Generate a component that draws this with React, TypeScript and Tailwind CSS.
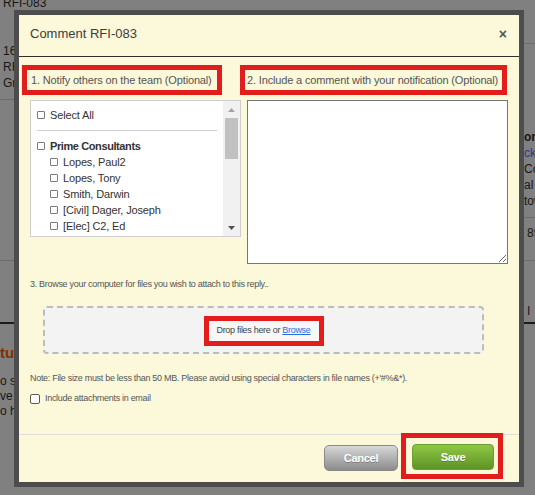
import { ReactNode } from 'react'

const members = ['Lopes, Paul2', 'Lopes, Tony', 'Smith, Darwin', '[Civil] Dager, Joseph', '[Elec] C2, Ed', '[Elec] Hart, Sam']

function Check({ big = false }: { big?: boolean }) {
  return (
    <span
      className={
        big
          ? 'inline-block h-[10px] w-[10px] shrink-0 rounded-[2px] border border-[#5a5a5a] bg-white'
          : 'inline-block h-[8px] w-[8px] shrink-0 rounded-[1px] border border-[#7a7a7a] bg-white'
      }
    />
  )
}

function Flag({ className, children }: { className: string; children: ReactNode }) {
  // red annotation frame round a label
  return <div className={`flex h-[30px] items-center border-[5px] border-[#e31c1c] ${className}`}>{children}</div>
}

export default function App() {
  return (
    <div className="relative h-[495px] w-[535px] overflow-hidden bg-[#808080] font-['Liberation_Sans',Arial,sans-serif] text-[12px] text-[#161616]">
      {/* page behind the overlay */}
      <div className="flex h-full">
        <div className="w-[524px] shrink-0 pl-[3px]">
          <div className="-mt-[4px] leading-[14px]">RFI-083</div>
          <div className="mt-[33px] leading-[16px]">
            <div>16/08/2021</div>
            <div>RFI</div>
            <div>Group</div>
          </div>
          <div className="-ml-[3px] mt-[8px] h-px w-[40px] bg-[#6c6c6c]" />
          <div className="-ml-[3px] mt-[160px] h-px w-[40px] bg-[#6c6c6c]" />
          <div className="-ml-[3px] mt-[61px] h-[2px] w-[40px] bg-[#1c1c1c]" />
          <div className="-ml-[3px] mt-[20px] text-[15px] font-bold leading-[18px] text-[#7c3300]">tus</div>
          <div className="-ml-[3px] mt-[12px] leading-[15px]">
            <div>o start</div>
            <div>ve a</div>
            <div>o help</div>
          </div>
        </div>
        <div className="w-[60px] shrink-0">
          <div className="mt-[43px] h-px bg-[#6c6c6c]" />
          <div className="mt-[85px] leading-[16px]">
            <div className="font-bold">or:</div>
            <div className="text-[#243b87]">ck</div>
            <div>Co</div>
            <div>al St</div>
            <div>town</div>
          </div>
          <div className="mt-[8px] h-px bg-[#6c6c6c]" />
          <div className="mt-[7px] pl-[3px] leading-[16px]">89</div>
          <div className="mt-[19px] h-px bg-[#6c6c6c]" />
          <div className="mt-[42px] pl-[3px] leading-[16px]">I</div>
          <div className="mt-[3px] h-[2px] bg-[#1c1c1c]" />
        </div>
      </div>

      {/* dialog */}
      <div className="absolute left-[14px] top-[10px] flex h-[477px] w-[510px] flex-col border-[5px] border-[#4d4d4d] bg-[#fcf8da]">
        <div className="flex h-[42px] shrink-0 items-center justify-between border-b border-[#2f2f2f] pb-[3px] pl-[11px] pr-[12px]">
          <span className="text-[13px] text-[#3c3c3c]">Comment RFI-083</span>
          <span className="text-[14px] font-bold leading-none text-[#555]">×</span>
        </div>

        <div className="px-[11px] pt-[8px] text-[#555]">
          <div className="flex gap-[6px]">
            <div className="w-[211px]">
              <Flag className="-ml-[8px] mb-[5px] w-[200px] pl-[4px]">
                <span className="text-[11px] tracking-[-0.15px]">1. Notify others on the team (Optional)</span>
              </Flag>
              <div className="flex h-[137px] border border-[#cfcfcf] bg-white">
                <div className="flex-1 overflow-hidden pl-[6px] pt-[6px] text-[11px] tracking-[-0.15px] text-[#333]">
                  <div className="flex h-[16px] items-center gap-[5px]">
                    <Check />
                    <span>Select All</span>
                  </div>
                  <div className="my-[7px] h-px w-[180px] bg-[#cfcfcf]" />
                  <div className="flex h-[16px] items-center gap-[5px]">
                    <Check />
                    <span className="font-bold tracking-[-0.4px]">Prime Consultants</span>
                  </div>
                  {members.map((m) => (
                    <div key={m} className="flex h-[16px] items-center gap-[5px] pl-[13px]">
                      <Check />
                      <span>{m}</span>
                    </div>
                  ))}
                </div>
                <div className="flex w-[17px] shrink-0 flex-col bg-[#f1f1f1]">
                  <div className="flex h-[17px] items-center justify-center">
                    <svg width="7" height="4" viewBox="0 0 7 4">
                      <polygon points="0,4 3.5,0 7,4" fill="#a3a3a3" />
                    </svg>
                  </div>
                  <div className="mx-[2px] h-[41px] bg-[#c1c1c1]" />
                  <div className="flex-1" />
                  <div className="flex h-[17px] items-center justify-center">
                    <svg width="7" height="4" viewBox="0 0 7 4">
                      <polygon points="0,0 7,0 3.5,4" fill="#505050" />
                    </svg>
                  </div>
                </div>
              </div>
            </div>

            <div className="w-[261px]">
              <Flag className="-ml-[7px] mb-[5px] w-[267px] pl-[2px]">
                <span className="text-[11px] tracking-[-0.15px]">2. Include a comment with your notification (Optional)</span>
              </Flag>
              <textarea className="block h-[164px] w-full border border-[#767676] bg-white outline-none" />
            </div>
          </div>

          <div className="mt-[14px] text-[9px] leading-[12px] tracking-[-0.3px]">
            3. Browse your computer for files you wish to attach to this reply..
          </div>

          <div className="ml-[13px] mt-[16px] flex h-[48px] w-[441px] items-center justify-center rounded-[4px] border-2 border-dashed border-[#bcbcbc] bg-[#f3f3f3]">
            <div className="mt-[1px] flex h-[30px] w-[120px] items-center justify-center border-[5px] border-[#e31c1c] bg-[#f7f7f7] text-[9px] tracking-[-0.3px] text-[#444]">
              Drop files here or&nbsp;<span className="text-[#1f6fe0] underline">Browse</span>
            </div>
          </div>

          <div className="mt-[18px] text-[9px] leading-[12px] tracking-[-0.3px]">
            Note: File size must be less than 50 MB. Please avoid using special characters in file names (+'#%&amp;*).
          </div>

          <div className="mt-[9px] flex h-[12px] items-center gap-[5px] text-[9px] tracking-[-0.3px]">
            <Check big />
            <span>Include attachments in email</span>
          </div>
        </div>

        <div className="mt-auto flex h-[48px] shrink-0 items-start justify-end border-t border-[#dcdcdc] pr-[16px]">
          <button className="mr-[3px] mt-[10px] h-[26px] w-[74px] rounded-[5px] border border-[#8a8a8a] bg-linear-to-b from-[#d8d8d8] to-[#8c8c8c] text-[11px] font-bold tracking-[-0.3px] text-white [text-shadow:0_1px_0_rgba(0,0,0,0.25)]">
            Cancel
          </button>
          <div className="-mt-[2px] border-[5px] border-[#e31c1c] pb-[4px] pl-[6px] pr-[4px] pt-[6px]">
            <button className="block h-[26px] w-[82px] rounded-[4px] border border-[#6d9c30] bg-linear-to-b from-[#8fc843] to-[#5f9326] text-[11px] font-bold tracking-[-0.3px] text-white [text-shadow:0_1px_0_rgba(0,0,0,0.2)]">
              Save
            </button>
          </div>
        </div>
      </div>
    </div>
  )
}
